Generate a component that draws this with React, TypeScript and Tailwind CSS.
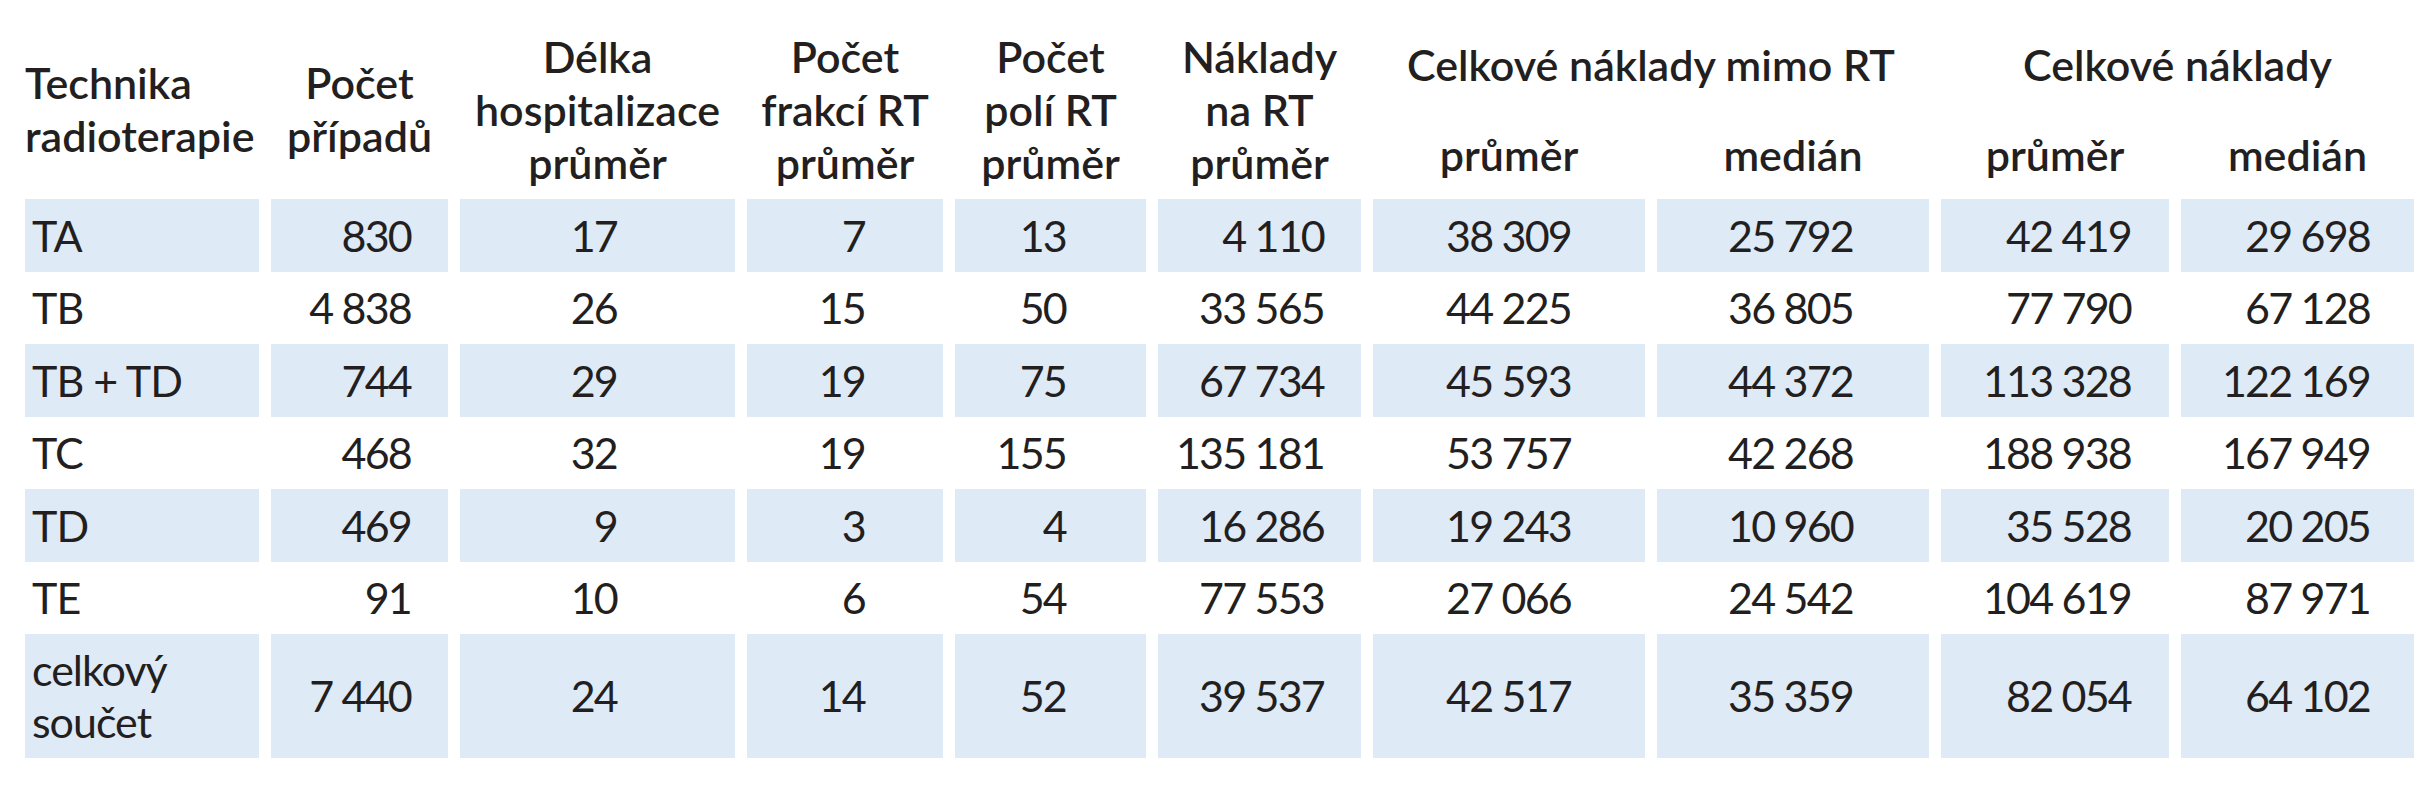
import React from "react";

const rows: string[][] = [
  ["TA", "830", "17", "7", "13", "4 110", "38 309", "25 792", "42 419", "29 698"],
  ["TB", "4 838", "26", "15", "50", "33 565", "44 225", "36 805", "77 790", "67 128"],
  ["TB + TD", "744", "29", "19", "75", "67 734", "45 593", "44 372", "113 328", "122 169"],
  ["TC", "468", "32", "19", "155", "135 181", "53 757", "42 268", "188 938", "167 949"],
  ["TD", "469", "9", "3", "4", "16 286", "19 243", "10 960", "35 528", "20 205"],
  ["TE", "91", "10", "6", "54", "77 553", "27 066", "24 542", "104 619", "87 971"],
  ["celkový součet", "7 440", "24", "14", "52", "39 537", "42 517", "35 359", "82 054", "64 102"],
];

const padR = [
  "",
  "pr-[37px]",
  "pr-[118px]",
  "pr-[78px]",
  "pr-[80px]",
  "pr-[37px]",
  "pr-[74px]",
  "pr-[76px]",
  "pr-[38px]",
  "pr-[44px]",
];

const rowH = ["h-[73px]", "h-[72px]", "h-[73px]", "h-[72px]", "h-[73px]", "h-[72px]", "h-[124px]"];

function HeadCell({ lines, className = "" }: { lines: string[]; className?: string }) {
  return (
    <div className={"row-span-2 flex flex-col justify-center " + className}>
      {lines.map((l, i) => (
        <div key={i} className="whitespace-nowrap">
          {l}
        </div>
      ))}
    </div>
  );
}

export default function App() {
  return (
    <div
      className="w-[2434px] h-[800px] bg-white text-[#231f20] pl-[25px] pt-[19px]"
      style={{ fontFamily: 'Lato, "Open Sans", "Liberation Sans", sans-serif' }}
    >
      <div className="grid grid-cols-[234px_177px_275px_196px_191px_203px_272px_272px_228px_233px] gap-x-[12px]">
        {/* header */}
        <div className="col-span-10 grid grid-cols-subgrid grid-rows-[90px_90px] text-[43px] leading-[53px] font-semibold tracking-[0px]">
          <HeadCell lines={["Technika", "radioterapie"]} className="items-start" />
          <HeadCell lines={["Počet", "případů"]} className="items-center" />
          <HeadCell lines={["Délka", "hospitalizace", "průměr"]} className="items-center" />
          <HeadCell lines={["Počet", "frakcí RT", "průměr"]} className="items-center" />
          <HeadCell lines={["Počet", "polí RT", "průměr"]} className="items-center" />
          <HeadCell lines={["Náklady", "na RT", "průměr"]} className="items-center" />
          <div className="col-span-2 flex items-center justify-center whitespace-nowrap">
            Celkové náklady mimo RT
          </div>
          <div className="col-span-2 flex items-center justify-center whitespace-nowrap">
            Celkové náklady
          </div>
          <div className="flex items-center justify-center">průměr</div>
          <div className="flex items-center justify-center">medián</div>
          <div className="flex items-center justify-center">průměr</div>
          <div className="flex items-center justify-center">medián</div>
        </div>

        {/* body */}
        {rows.map((r, ri) => (
          <div
            key={ri}
            className="col-span-10 grid grid-cols-subgrid text-[43px] leading-[52px] tracking-[-1.8px]"
          >
            {r.map((c, ci) => {
              const bg = ri % 2 === 0 ? "bg-[#dfeaf7]" : "";
              if (ci === 0) {
                const parts = c === "celkový součet" ? ["celkový", "součet"] : [c];
                return (
                  <div key={ci} className={`${rowH[ri]} ${bg} flex flex-col justify-center pl-[7px] tracking-[-1px]`}>
                    {parts.map((p, pi) => (
                      <div key={pi} className="whitespace-nowrap">
                        {p}
                      </div>
                    ))}
                  </div>
                );
              }
              return (
                <div
                  key={ci}
                  className={`${rowH[ri]} ${bg} ${padR[ci]} flex items-center justify-end whitespace-nowrap`}
                >
                  {c}
                </div>
              );
            })}
          </div>
        ))}
      </div>
    </div>
  );
}
